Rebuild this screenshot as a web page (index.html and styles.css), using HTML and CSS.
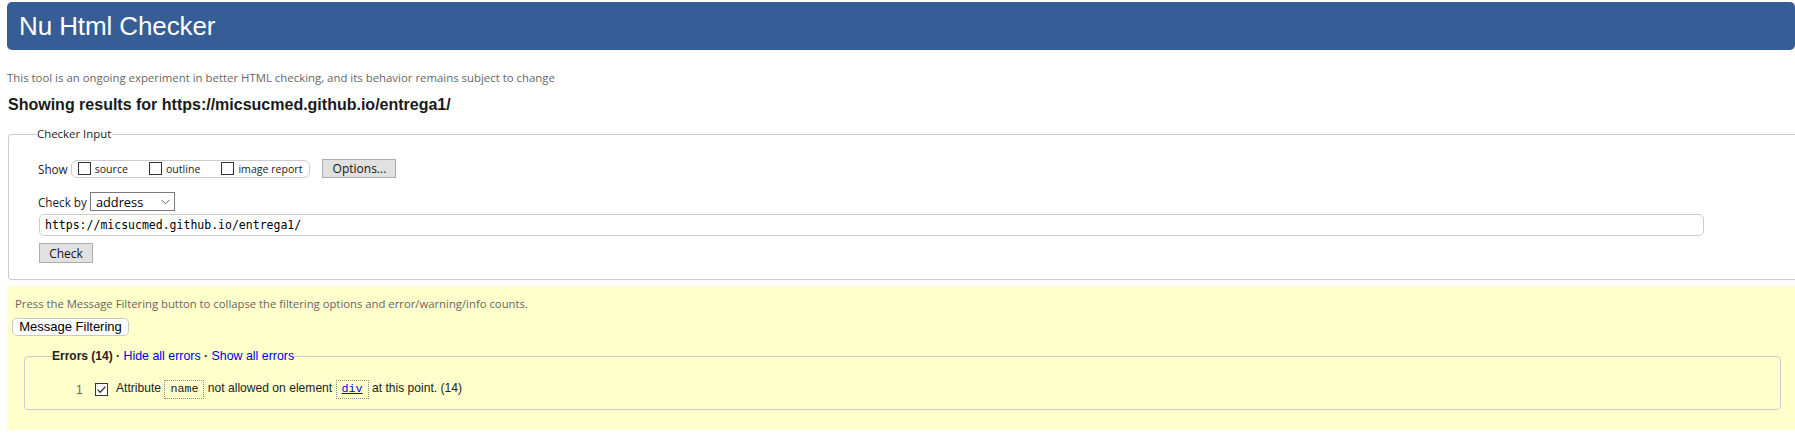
FILE: index.html
```html
<!DOCTYPE html>
<html lang="en">
<head>
<meta charset="utf-8">
<title>Showing results for https://micsucmed.github.io/entrega1/ - Nu Html Checker</title>
<link rel="stylesheet" href="styles.css">
</head>
<body>
<header class="masthead"><h1 class="masthead-title">Nu Html Checker</h1></header>
<p class="intro">This tool is an ongoing experiment in better HTML checking, and its behavior remains subject to change</p>
<h2 class="results-title">Showing results for https://micsucmed.github.io/entrega1/</h2>
<form class="checker-form">
  <fieldset class="checker-input">
    <legend class="checker-legend">Checker Input</legend>
    <div class="show-row">
      <span class="field-label">Show</span>
      <span class="option-group">
        <label class="option"><span class="box"></span>source</label>
        <label class="option"><span class="box"></span>outline</label>
        <label class="option"><span class="box"></span>image report</label>
      </span>
      <button type="button" class="gray-btn options-btn">Options...</button>
    </div>
    <div class="checkby-row">
      <span class="field-label">Check by</span>
      <span class="select">address<svg class="chevron" width="9" height="6" viewBox="0 0 9 6"><path d="M0.5 0.8 L4.5 4.8 L8.5 0.8" fill="none" stroke="#666" stroke-width="1"/></svg></span>
    </div>
    <div class="url-input">https://micsucmed.github.io/entrega1/</div>
    <button type="button" class="gray-btn check-btn">Check</button>
  </fieldset>
</form>
<section class="filters">
  <p class="hint">Press the Message Filtering button to collapse the filtering options and error/warning/info counts.</p>
  <button type="button" class="filter-btn">Message Filtering</button>
  <fieldset class="errors">
    <legend class="errors-legend"><strong>Errors (14) ·</strong> <a href="#" class="link">Hide all errors</a> <strong>·</strong> <a href="#" class="link">Show all errors</a></legend>
    <div class="error-row">
      <span class="num">1</span>
      <svg class="check-box" width="13" height="13" viewBox="0 0 13 13"><rect x="0.5" y="0.5" width="12" height="12" fill="#fff" stroke="#333"/><path d="M2.6 6.6 L5.2 9.2 L10.4 3.6" fill="none" stroke="#333" stroke-width="1.3"/></svg>
      <span class="msg">Attribute <code class="code">name</code> not allowed on element <code class="code"><a href="#" class="code-link">div</a></code> at this point. (14)</span>
    </div>
  </fieldset>
</section>
</body>
</html>
```
FILE: styles.css
```css
html, body {
  margin: 0;
  background: #fff;
}
body {
  padding: 2px 0 0 7px;
  font-family: "Open Sans", "Noto Sans", sans-serif;
  color: #222;
}
.masthead {
  height: 48px;
  background: #365d95;
  border-radius: 5px;
  display: flex;
  align-items: center;
  padding-left: 12px;
}
.masthead-title {
  margin: 0;
  font-family: "Liberation Sans", Arial, sans-serif;
  font-weight: normal;
  font-size: 26px;
  line-height: 30px;
  color: #fff;
  letter-spacing: -0.1px;
}
.intro {
  margin: 20px 0 0 0;
  font-size: 11.4px;
  line-height: 16px;
  color: #666;
}
.results-title {
  margin: 10px 0 0 1px;
  font-family: "Liberation Sans", Arial, sans-serif;
  font-weight: bold;
  font-size: 16px;
  line-height: 18px;
  color: #1a1a1a;
}
.checker-form {
  margin: 12px 0 0 1px;
}
.checker-input {
  margin: 0;
  border: 1px solid #ccc;
  border-right: 0;
  border-radius: 4px 0 0 4px;
  padding: 17px 0 16px 30px;
  min-width: 0;
}
.checker-legend {
  font-size: 11.4px;
  line-height: 16px;
  padding: 0 1px;
  margin-left: -3px;
  color: #222;
}
.show-row {
  display: flex;
  align-items: center;
  height: 19px;
}
.field-label {
  font-size: 11.7px;
  color: #222;
  margin-left: -1px;
}
.option-group {
  display: flex;
  align-items: center;
  height: 16px;
  margin-left: 3px;
  border: 1px solid #ccc;
  border-radius: 6px;
  padding: 0 7px 0 6px;
  gap: 21px;
}
.option {
  display: flex;
  align-items: center;
  gap: 4px;
  font-size: 10.6px;
  color: #222;
}
.box {
  width: 11px;
  height: 11px;
  border: 1px solid #333;
  background: #fff;
}
.gray-btn {
  font-family: "Open Sans", "Noto Sans", sans-serif;
  font-size: 12px;
  color: #111;
  background: #e1e1e1;
  border: 1px solid #adadad;
  border-radius: 0;
  padding: 0;
  line-height: 17px;
}
.options-btn {
  width: 74px;
  height: 19px;
  margin-left: 12px;
}
.checkby-row {
  display: flex;
  align-items: center;
  margin-top: 14px;
  height: 19px;
}
.select {
  display: flex;
  align-items: center;
  justify-content: space-between;
  box-sizing: border-box;
  width: 85px;
  height: 19px;
  margin-left: 3px;
  border: 1px solid #7a7a7a;
  padding: 0 4px 0 5px;
  font-size: 12.8px;
  color: #000;
}
.chevron {
  display: block;
}
.url-input {
  box-sizing: border-box;
  width: 1665px;
  height: 22px;
  margin-top: 3px;
  border: 1px solid #ccc;
  border-radius: 5px;
  padding-left: 5px;
  font-family: "DejaVu Sans Mono", "Liberation Mono", monospace;
  font-size: 11.5px;
  line-height: 20px;
  color: #000;
}
.check-btn {
  display: block;
  width: 54px;
  height: 20px;
  margin-top: 7px;
}
.filters {
  margin-top: 6px;
  background: #ffffcc;
  padding: 10px 14px 20px 5px;
}
.hint {
  margin: 0 0 0 3px;
  font-size: 11.3px;
  line-height: 16px;
  color: #666;
}
.filter-btn {
  display: block;
  margin-top: 6px;
  width: 117px;
  height: 18px;
  padding: 0;
  background: #fff;
  border: 1px solid #c8c8c8;
  border-radius: 5px;
  font-family: "Liberation Sans", Arial, sans-serif;
  font-size: 13px;
  color: #000;
  line-height: 16px;
}
.errors {
  margin: 13px 0 0 12px;
  border: 1px solid #ccc;
  border-radius: 4px;
  padding: 17px 0 10px 28px;
  min-width: 0;
}
.errors-legend {
  font-family: "Liberation Sans", Arial, sans-serif;
  font-size: 12.4px;
  line-height: 14px;
  padding: 0;
  margin-left: -1px;
  color: #222;
}
.errors-legend strong {
  font-weight: bold;
  font-size: 12px;
}
.link {
  color: #0000ee;
  text-decoration: none;
}
.error-row {
  display: flex;
  align-items: center;
  height: 19px;
  padding-left: 23px;
  font-family: "Liberation Sans", Arial, sans-serif;
  font-size: 12.1px;
  color: #222;
}
.num {
  color: #666;
  width: 19px;
}
.check-box {
  display: block;
  margin-right: 8px;
}
.msg {
  white-space: nowrap;
}
.code {
  display: inline-block;
  border: 1px dotted #888;
  padding: 3px 5px;
  font-family: "Liberation Mono", "Courier New", monospace;
  font-size: 11.7px;
  line-height: 11px;
  color: #222;
}
.code-link {
  color: #0000ee;
  text-decoration: underline;
}
```
